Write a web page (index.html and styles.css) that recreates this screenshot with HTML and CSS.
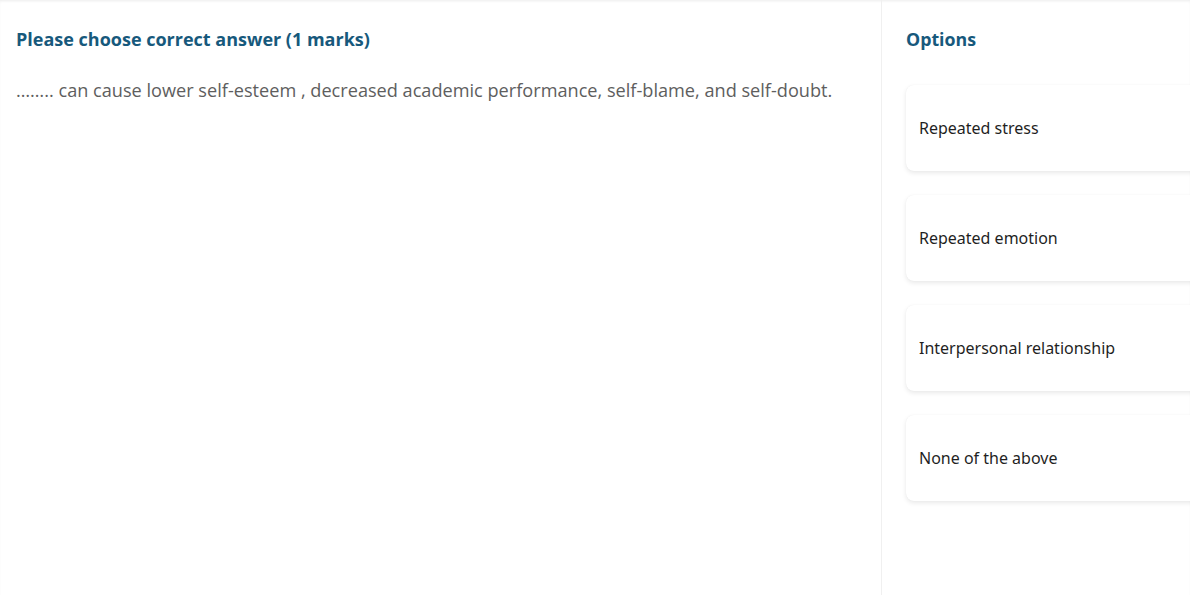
FILE: index.html
```html
<!DOCTYPE html>
<html>
<head>
<meta charset="utf-8">
<link rel="stylesheet" href="styles.css">
</head>
<body>
<div class="page">
  <section class="question">
    <h2 class="title">Please choose correct answer (1 marks)</h2>
    <p class="text">…….. can cause lower self-esteem , decreased academic performance, self-blame, and self-doubt.</p>
  </section>
  <aside class="options">
    <h2 class="title">Options</h2>
    <div class="list">
      <div class="card">Repeated stress</div>
      <div class="card">Repeated emotion</div>
      <div class="card">Interpersonal relationship</div>
      <div class="card">None of the above</div>
    </div>
  </aside>
</div>
</body>
</html>
```
FILE: styles.css
```css
html, body {
  margin: 0;
  padding: 0;
  background: #ffffff;
  overflow: hidden;
}
.page {
  width: 1190px;
  height: 595px;
  display: flex;
  box-shadow: inset 0 2px 3px -1px rgba(0,0,0,0.08);
  font-family: "Open Sans", sans-serif;
}
.question {
  width: 882px;
  flex: none;
  border-right: 1px solid #f0f0f0;
  padding: 27px 16px 0 16px;
  box-sizing: border-box;
}
.title {
  margin: 0;
  font-size: 18px;
  font-weight: 700;
  line-height: 24px;
  color: #17597c;
}
.options .title {
  font-size: 17.8px;
}
.text {
  margin: 27px 0 0 0;
  font-size: 18.15px;
  line-height: 24px;
  color: #5e5e5e;
}
.options {
  flex: none;
  width: 330px;
  padding: 27px 0 0 24px;
  box-sizing: border-box;
}
.list {
  margin-top: 34px;
  display: flex;
  flex-direction: column;
  gap: 24px;
}
.card {
  height: 86px;
  display: flex;
  align-items: center;
  padding-left: 13px;
  border-radius: 8px;
  background: #fff;
  box-shadow: 0 2px 5px rgba(0,0,0,0.09), 0 0 1px rgba(0,0,0,0.06);
  font-family: "Noto Sans", sans-serif;
  font-size: 16px;
  color: #1f1f1f;
  width: 300px;
}
```
